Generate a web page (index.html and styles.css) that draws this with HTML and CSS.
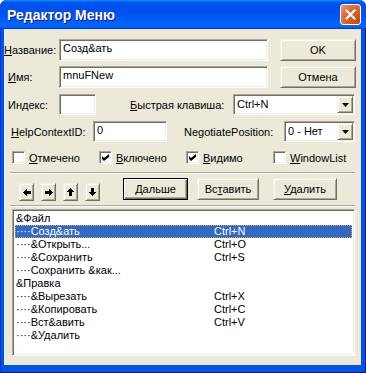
FILE: index.html
```html
<!DOCTYPE html>
<html lang="ru">
<head>
    <meta charset="UTF-8">
    <title>Редактор Меню</title>
    <link rel="stylesheet" href="styles.css">
</head>
<body>
    <div class="window">
        <div class="titlebar">
            <span class="titlebar__text">Редактор Меню</span>
            <div class="titlebar__close">
                <svg width="11" height="11" viewBox="0 0 11 11"><path d="M1.5 1.5l8 8M9.5 1.5l-8 8" stroke="#fff" stroke-width="2.2" stroke-linecap="square"/></svg>
            </div>
        </div>
        <div class="client">
            <div class="row row_name">
                <div class="label label_name"><u>Н</u>азвание:</div>
                <div class="edit edit_wide">Созд&amp;ать</div>
                <div class="btn btn_side">OK</div>
            </div>
            <div class="row row_id">
                <div class="label label_id"><u>И</u>мя:</div>
                <div class="edit edit_wide">mnuFNew</div>
                <div class="btn btn_side">Отмена</div>
            </div>
            <div class="row row_index">
                <div class="label label_id">Ин<u>д</u>екс:</div>
                <div class="edit edit_index"></div>
                <div class="label label_shortcut"><u>Б</u>ыстрая клавиша:</div>
                <div class="combo combo_shortcut">
                    <div class="combo__value">Ctrl+N</div>
                    <div class="combo__btn"><svg width="7" height="4" viewBox="0 0 7 4"><path d="M0 0h7L3.5 4z"/></svg></div>
                </div>
            </div>
            <div class="row row_help">
                <div class="label label_help"><u>H</u>elpContextID:</div>
                <div class="edit edit_help">0</div>
                <div class="label label_negotiate">Ne<u>g</u>otiatePosition:</div>
                <div class="combo combo_negotiate">
                    <div class="combo__value">0 - Нет</div>
                    <div class="combo__btn"><svg width="7" height="4" viewBox="0 0 7 4"><path d="M0 0h7L3.5 4z"/></svg></div>
                </div>
            </div>
            <div class="row row_flags">
                <div class="check check_first">
                    <span class="check__box"></span><span><u>О</u>тмечено</span>
                </div>
                <div class="check">
                    <span class="check__box"><svg width="7" height="7" viewBox="0 0 7 7"><path d="M0 2l2 2 5-4v3L2 7 0 5z"/></svg></span><span><u>В</u>ключено</span>
                </div>
                <div class="check">
                    <span class="check__box"><svg width="7" height="7" viewBox="0 0 7 7"><path d="M0 2l2 2 5-4v3L2 7 0 5z"/></svg></span><span><u>В</u>идимо</span>
                </div>
                <div class="check">
                    <span class="check__box"></span><span><u>W</u>indowList</span>
                </div>
            </div>
            <div class="separator"></div>
            <div class="row row_tools">
                <div class="btn btn_arrow"><svg width="8" height="7" viewBox="0 0 8 7" shape-rendering="crispEdges"><path d="M0 3.5L4 0v7z M4 2h4v3H4z"/></svg></div>
                <div class="btn btn_arrow"><svg width="8" height="7" viewBox="0 0 8 7" shape-rendering="crispEdges"><path d="M8 3.5L4 0v7z M0 2h4v3H0z"/></svg></div>
                <div class="btn btn_arrow"><svg width="7" height="8" viewBox="0 0 7 8" shape-rendering="crispEdges"><path d="M3.5 0L0 4h7z M2 4h3v4H2z"/></svg></div>
                <div class="btn btn_arrow"><svg width="7" height="8" viewBox="0 0 7 8" shape-rendering="crispEdges"><path d="M3.5 8L0 4h7z M2 0h3v4H2z"/></svg></div>
                <div class="btn btn_tool btn_default"><span><u>Д</u>альше</span></div>
                <div class="btn btn_tool btn_insert"><span>Вс<u>т</u>авить</span></div>
                <div class="btn btn_tool btn_delete"><span><u>У</u>далить</span></div>
            </div>
            <div class="separator separator_second"></div>
            <div class="list">
                <div class="list__item"><span class="list__name">&amp;Файл</span></div>
                <div class="list__item list__item_selected"><span class="list__name">····Созд&amp;ать</span><span>Ctrl+N</span></div>
                <div class="list__item"><span class="list__name">····&amp;Открыть...</span><span>Ctrl+O</span></div>
                <div class="list__item"><span class="list__name">····&amp;Сохранить</span><span>Ctrl+S</span></div>
                <div class="list__item"><span class="list__name">····Сохранить &amp;как...</span></div>
                <div class="list__item"><span class="list__name">&amp;Правка</span></div>
                <div class="list__item"><span class="list__name">····&amp;Вырезать</span><span>Ctrl+X</span></div>
                <div class="list__item"><span class="list__name">····&amp;Копировать</span><span>Ctrl+C</span></div>
                <div class="list__item"><span class="list__name">····Вст&amp;авить</span><span>Ctrl+V</span></div>
                <div class="list__item"><span class="list__name">····&amp;Удалить</span></div>
            </div>
        </div>
    </div>
</body>
</html>
```

FILE: styles.css
```css
*{box-sizing:border-box}
body{margin:0;background:#fff;font:11px "Liberation Sans",Arial,sans-serif;color:#000}
u{text-decoration:underline;text-underline-offset:1px}

.window{width:366px;height:373px;display:flex;flex-direction:column;background:#0055e5;border-radius:7px 7px 0 0;overflow:hidden;box-shadow:inset 1px 0 #0831d9,inset -1px 0 #00138c,inset 0 -1px #00138c}
.titlebar{flex:none;height:29px;display:flex;align-items:center;justify-content:space-between;padding:0 5px 0 7px;background:linear-gradient(180deg,#0997ff,#0053ee 8%,#0050ee 40%,#0066ff 88%,#0066ff 93%,#005bff 95%,#003dd7 96%,#003dd7)}
.titlebar__text{color:#fff;font:bold 14px "Liberation Sans",Arial,sans-serif;text-shadow:1px 1px #0f1089;padding-top:1px}
.titlebar__close{width:21px;height:21px;display:flex;align-items:center;justify-content:center;border:1px solid #fff;border-radius:3px;background:radial-gradient(circle at 90% 90%,#cc4600,#dc6527 55%,#e5805a 80%,#f0a58a)}

.client{flex:1;margin:0 5px 8px 4px;background:#ece9d8;display:flex;flex-direction:column}

.row{display:flex;align-items:center}
.row_name{margin-top:10px;height:22px}
.row_id{margin-top:5px;height:22px}
.row_index{margin-top:6px;height:21px}
.row_help{margin-top:6px;height:21px}
.row_flags{margin-top:9px;height:13px}
.row_tools{margin-top:4px;height:23px;align-items:flex-start}

.label{flex:none;white-space:nowrap}
.label_name{width:55px}
.label_id{width:55px;padding-left:4px}
.label_help{width:89px;padding-left:7px}
.label_shortcut{width:103px;margin-left:34px}
.label_negotiate{width:100px;margin-left:17px}

.edit{flex:none;height:100%;padding:0 3px;line-height:17px;background:#fff;border:1px solid;border-color:#aca899 #fff #fff #aca899;box-shadow:inset 1px 1px #716f64,inset -1px -1px #f1efe2;white-space:nowrap}
.edit_wide{width:209px}
.edit_index{width:37px}
.edit_help{width:74px}

.btn{flex:none;display:flex;align-items:center;justify-content:center;background:#ece9d8;border:1px solid;border-color:#f1efe2 #716f64 #716f64 #f1efe2;box-shadow:inset 1px 1px #fff,inset -1px -1px #aca899}
.btn_side{width:76px;height:100%;margin-left:12px}
.btn_arrow{width:15px;height:18px;margin-top:5px;margin-right:7px}
.btn_arrow:first-child{margin-left:15px}
.btn_arrow svg{display:block}
.btn_tool{height:22px}
.btn_default{width:65px;margin-left:16px;border-color:#000;box-shadow:inset 1px 1px #fff,inset -1px -1px #716f64,inset -2px -2px #aca899}
.btn_insert{width:62px;margin-left:9px}
.btn_delete{width:64px;margin-left:14px}

.combo{flex:none;height:100%;display:flex;padding:2px;background:#fff;border:1px solid;border-color:#aca899 #fff #fff #aca899;box-shadow:inset 1px 1px #716f64,inset -1px -1px #f1efe2}
.combo_shortcut{width:122px}
.combo_negotiate{width:71px}
.combo__value{flex:1;padding-left:1px;line-height:15px;white-space:nowrap}
.combo__btn{width:16px;display:flex;align-items:center;justify-content:center;margin:-1px -1px -1px 0;background:#ece9d8;border:1px solid;border-color:#f1efe2 #716f64 #716f64 #f1efe2;box-shadow:inset 1px 1px #fff,inset -1px -1px #aca899}
.combo__btn svg{display:block}

.check{flex:none;width:87px;display:flex;align-items:center;gap:4px;white-space:nowrap}
.check_first{margin-left:8px}
.check__box{flex:none;width:13px;height:13px;display:flex;align-items:center;justify-content:center;background:#fff;border:1px solid;border-color:#aca899 #fff #fff #aca899;box-shadow:inset 1px 1px #716f64,inset -1px -1px #f1efe2}
.check__box svg{display:block}

.separator{flex:none;height:2px;margin:8px 6px 0 6px;border-top:1px solid #aca899;border-bottom:1px solid #fff}
.separator_second{margin-top:4px}

.list{flex:none;width:343px;height:147px;margin:2px 0 0 8px;padding:2px;background:#fff;border:1px solid;border-color:#aca899 #fff #fff #aca899;box-shadow:inset 1px 1px #716f64,inset -1px -1px #f1efe2}
.list__item{display:flex;height:13px;line-height:13px;padding-left:1px;white-space:nowrap}
.list__name{width:198px}
.list__item_selected{background:#316ac5;color:#fff;outline:1px dotted #e8a040;outline-offset:-1px}
```
